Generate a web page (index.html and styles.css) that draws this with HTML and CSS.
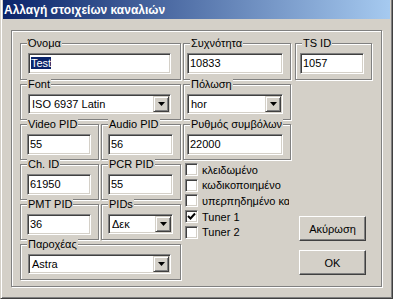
FILE: index.html
```html
<!DOCTYPE html>
<html lang="el">
<head>
    <meta charset="UTF-8">
    <title>Αλλαγή στοιχείων καναλιών</title>
    <link rel="stylesheet" href="styles.css">
</head>
<body>
    <div class="window">
        <div class="titlebar">Αλλαγή στοιχείων καναλιών</div>
        <div class="client">
            <div class="panel">
                <!-- row 1 -->
                <div class="group span-2">
                    <span class="legend">Όνομα</span>
                    <div class="edit"><span class="selected">Test</span></div>
                </div>
                <div class="group mid">
                    <span class="legend">Συχνότητα</span>
                    <div class="edit">10833</div>
                </div>
                <div class="group ts">
                    <span class="legend">TS ID</span>
                    <div class="edit">1057</div>
                </div>

                <!-- row 2 -->
                <div class="group span-2">
                    <span class="legend">Font</span>
                    <div class="combo">
                        <span class="combo-text">ISO 6937 Latin</span>
                        <span class="drop"><svg width="7" height="4"><path d="M0 0h7L3.5 4z"/></svg></span>
                    </div>
                </div>
                <div class="group mid">
                    <span class="legend">Πόλωση</span>
                    <div class="combo">
                        <span class="combo-text">hor</span>
                        <span class="drop"><svg width="7" height="4"><path d="M0 0h7L3.5 4z"/></svg></span>
                    </div>
                </div>

                <!-- row 3 -->
                <div class="group small col-1">
                    <span class="legend">Video PID</span>
                    <div class="edit">55</div>
                </div>
                <div class="group small">
                    <span class="legend">Audio PID</span>
                    <div class="edit">56</div>
                </div>
                <div class="group mid">
                    <span class="legend">Ρυθμός συμβόλων</span>
                    <div class="edit">22000</div>
                </div>

                <!-- row 4 -->
                <div class="group small col-1">
                    <span class="legend">Ch. ID</span>
                    <div class="edit">61950</div>
                </div>
                <div class="group small">
                    <span class="legend">PCR PID</span>
                    <div class="edit">55</div>
                </div>

                <div class="checks">
                    <div class="check"><span class="box"></span><span class="check-text">κλειδωμένο</span></div>
                    <div class="check"><span class="box"></span><span class="check-text">κωδικοποιημένο</span></div>
                    <div class="check"><span class="box"></span><span class="check-text">υπερπηδημένο κανάλι</span></div>
                    <div class="check"><span class="box"><svg width="9" height="9"><path d="M1 4l2.5 2.5L8 1.5" fill="none" stroke="#000" stroke-width="2"/></svg></span><span class="check-text">Tuner 1</span></div>
                    <div class="check"><span class="box"></span><span class="check-text">Tuner 2</span></div>
                </div>

                <!-- row 5 -->
                <div class="group small col-1">
                    <span class="legend">PMT PID</span>
                    <div class="edit">36</div>
                </div>
                <div class="group small">
                    <span class="legend">PIDs</span>
                    <div class="combo">
                        <span class="combo-text">Δεκ</span>
                        <span class="drop"><svg width="7" height="4"><path d="M0 0h7L3.5 4z"/></svg></span>
                    </div>
                </div>

                <div class="buttons">
                    <button class="btn">Ακύρωση</button>
                    <button class="btn">OK</button>
                </div>

                <!-- row 6 -->
                <div class="group span-2 col-1">
                    <span class="legend">Παροχέας</span>
                    <div class="combo">
                        <span class="combo-text">Astra</span>
                        <span class="drop"><svg width="7" height="4"><path d="M0 0h7L3.5 4z"/></svg></span>
                    </div>
                </div>
            </div>
        </div>
    </div>
</body>
</html>
```

FILE: styles.css
```css
body {
    margin: 0;
    font-family: "Liberation Sans", Arial, sans-serif;
    font-size: 11px;
    color: #000;
    background: #d4d0c8;
}

.window {
    box-sizing: border-box;
    width: 393px;
    height: 299px;
    padding: 0 2px 2px 2px;
    background: #d4d0c8;
    border-left: 1px solid #d4d0c8;
    border-right: 1px solid #404040;
    border-bottom: 1px solid #404040;
    box-shadow: inset 1px 0 #fff, inset -1px -1px #808080;
}

.titlebar {
    height: 19px;
    line-height: 20px;
    padding-left: 1px;
    color: #fff;
    font-weight: bold;
    font-size: 12px;
    background: linear-gradient(to right, #0a246a, #a6caf0);
}

.client {
    padding: 11px 0 0 8px;
}

/* etched frame */
.panel {
    box-sizing: border-box;
    width: 371px;
    height: 257px;
    padding: 12px 8px 0 8px;
    border: 1px solid #808080;
    box-shadow: inset 1px 1px #fff, 1px 1px #fff;
    display: grid;
    grid-template-columns: 79px 80px 108px 79px;
    grid-template-rows: 37px 36px 36px 36px 36px 36px;
    column-gap: 2px;
    row-gap: 4px;
}

.group {
    position: relative;
    box-sizing: border-box;
    border: 1px solid #808080;
    box-shadow: inset 1px 1px #fff, 1px 1px #fff;
    padding: 9px 9px 0 7px;
}

.group.mid {
    grid-column: 3;
    padding: 9px 7px 0 3px;
}

.group.ts {
    grid-column: 4;
    margin-left: 2px;
    padding: 9px 7px 0 4px;
}

.group.small {
    padding: 9px 7px 0 6px;
}

.span-2 {
    grid-column: 1 / span 2;
}

.col-1 {
    grid-column: 1;
}

.group.span-2.col-1 {
    grid-column: 1 / span 2;
}

.legend {
    position: absolute;
    top: -7px;
    left: 6px;
    padding: 0 1px;
    line-height: 13px;
    background: #d4d0c8;
    white-space: nowrap;
}

/* sunken edit */
.edit {
    box-sizing: border-box;
    height: 21px;
    padding: 0 2px;
    line-height: 19px;
    background: #fff;
    border: 1px solid;
    border-color: #808080 #fff #fff #808080;
    box-shadow: inset 1px 1px #404040, inset -1px -1px #d4d0c8;
    white-space: nowrap;
    overflow: hidden;
}

.selected {
    background: #0a246a;
    color: #fff;
}

.combo {
    box-sizing: border-box;
    height: 20px;
    padding: 1px;
    display: flex;
    background: #fff;
    border: 1px solid;
    border-color: #808080 #fff #fff #808080;
    box-shadow: inset 1px 1px #404040, inset -1px -1px #d4d0c8;
}

.combo-text {
    flex: 1;
    padding-left: 2px;
    line-height: 16px;
    white-space: nowrap;
    overflow: hidden;
}

.drop {
    box-sizing: border-box;
    width: 16px;
    display: flex;
    align-items: center;
    justify-content: center;
    background: #d4d0c8;
    border: 1px solid;
    border-color: #d4d0c8 #404040 #404040 #d4d0c8;
    box-shadow: inset 1px 1px #fff, inset -1px -1px #808080;
}

.drop svg {
    display: block;
}

.checks {
    grid-column: 3;
    grid-row: 4 / span 2;
    margin-top: -2px;
    padding-left: 2px;
    display: flex;
    flex-direction: column;
}

.check {
    width: 104px;
    height: 16.5px;
    display: flex;
    align-items: center;
    gap: 4px;
    overflow: hidden;
}

.box {
    box-sizing: border-box;
    flex: none;
    width: 13px;
    height: 13px;
    display: flex;
    align-items: center;
    justify-content: center;
    background: #fff;
    border: 1px solid;
    border-color: #808080 #fff #fff #808080;
    box-shadow: inset 1px 1px #404040, inset -1px -1px #d4d0c8;
}

.check-text {
    white-space: nowrap;
}

.buttons {
    grid-column: 4;
    grid-row: 5 / span 2;
    padding: 12px 0 0 6px;
    display: flex;
    flex-direction: column;
    gap: 9px;
}

.btn {
    box-sizing: border-box;
    width: 67px;
    height: 25px;
    padding: 0;
    font-family: inherit;
    font-size: 11px;
    color: #000;
    background: #d4d0c8;
    border: 1px solid;
    border-color: #fff #404040 #404040 #fff;
    box-shadow: inset -1px -1px #808080;
}
```
